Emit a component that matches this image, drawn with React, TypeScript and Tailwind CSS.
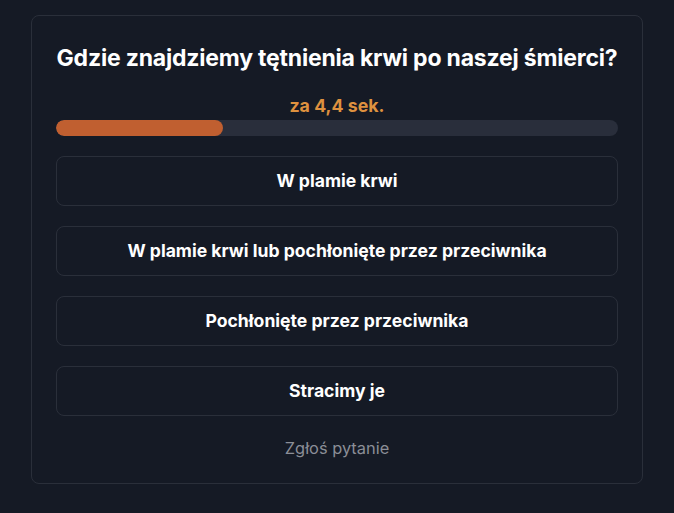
const options = [
  'W plamie krwi',
  'W plamie krwi lub pochłonięte przez przeciwnika',
  'Pochłonięte przez przeciwnika',
  'Stracimy je',
]

export default function App() {
  const progress = 29.7

  return (
    <div className="min-h-[513px] w-full bg-[#151a25] px-[31px] pt-[15px] font-['Inter','Noto_Sans',sans-serif]">
      <div className="flex flex-col rounded-lg border border-[#2a2f3a] px-6 pt-[28px] pb-[25px]">
        <h1 className="text-center text-[23px] leading-[28px] font-bold text-white tracking-[-0.2px] whitespace-nowrap">
          Gdzie znajdziemy tętnienia krwi po naszej śmierci?
        </h1>

        <div className="mt-[22px] text-center text-[17.8px] leading-6 font-bold text-[#de913f]">za 4,4 sek.</div>
        <div className="mt-[2px] h-4 w-full overflow-hidden rounded-full bg-[#292e3b]">
          <div className="h-full rounded-full bg-[#c05f30]" style={{ width: `${progress}%` }} />
        </div>

        <div className="mt-5 flex flex-col gap-5">
          {options.map(o => (
            <button
              key={o}
              className="h-[50px] w-full rounded-lg border border-[#2a2f3a] bg-transparent text-[17.6px] font-bold text-white"
            >
              {o}
            </button>
          ))}
        </div>

        <div className="mt-[22px] text-center text-[16.4px] leading-5 text-[#8b8e97]">Zgłoś pytanie</div>
      </div>
    </div>
  )
}
